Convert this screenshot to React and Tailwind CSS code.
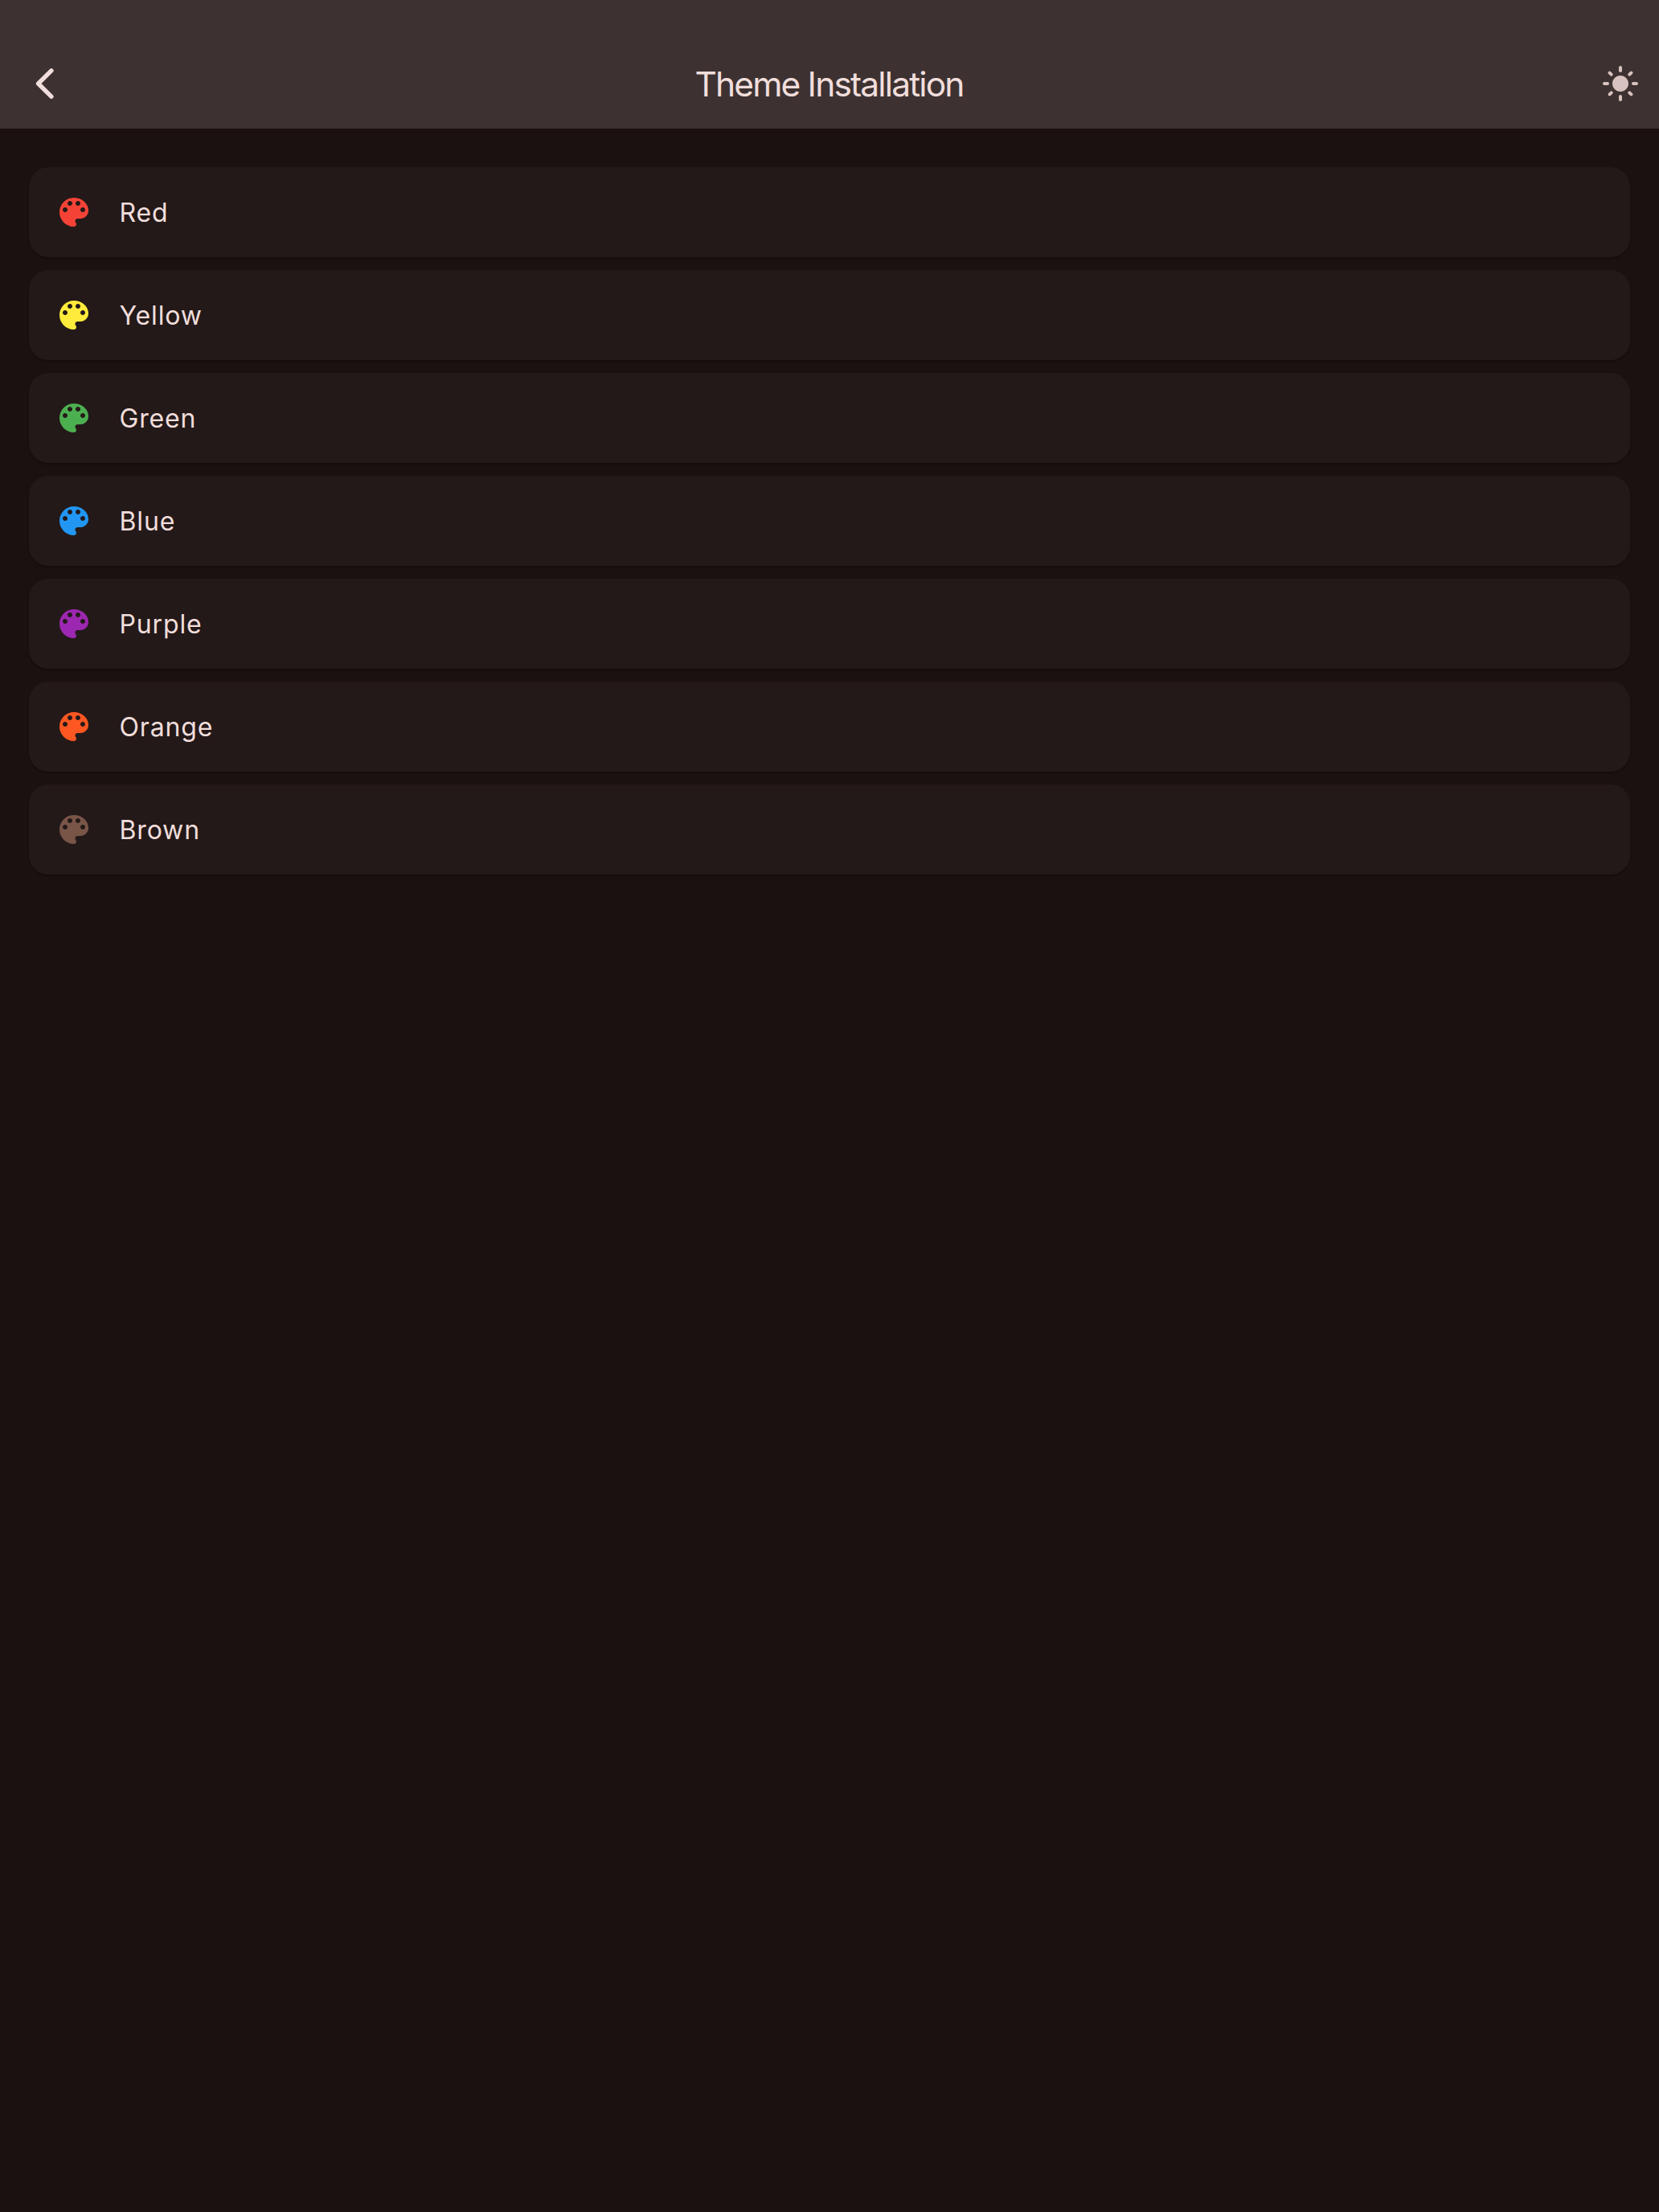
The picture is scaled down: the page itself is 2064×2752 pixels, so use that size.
import React from "react";
import { MdLightMode } from "react-icons/md";

const themes = [
  { name: "Red", color: "text-[#f44336]" },
  { name: "Yellow", color: "text-[#ffeb3b]" },
  { name: "Green", color: "text-[#4caf50]" },
  { name: "Blue", color: "text-[#2196f3]" },
  { name: "Purple", color: "text-[#9c27b0]" },
  { name: "Orange", color: "text-[#ff5722]" },
  { name: "Brown", color: "text-[#795548]" },
];

function BackIcon() {
  return (
    <svg viewBox="0 0 48 48" className="size-12" fill="none" stroke="currentColor">
      <path d="M31.9 7.8 15.6 24 31.9 40.2" strokeWidth="5.4" strokeLinecap="round" strokeLinejoin="round" />
    </svg>
  );
}

function PaletteIcon({ className }) {
  return (
    <svg viewBox="0 0 24 24" className={className} fill="currentColor">
      <path d="M12 3c-4.97 0-9 4.03-9 9s4.03 9 9 9c.83 0 1.5-.67 1.5-1.5 0-.39-.15-.74-.39-1.01-.23-.26-.38-.61-.38-.99 0-.83.67-1.5 1.5-1.5H16c2.76 0 5-2.24 5-5 0-4.42-4.03-8-9-8zm-5.5 9c-.83 0-1.5-.67-1.5-1.5S5.67 9 6.5 9 8 9.67 8 10.5 7.33 12 6.5 12zm3-4C8.67 8 8 7.33 8 6.5S8.67 5 9.5 5s1.5.67 1.5 1.5S10.33 8 9.5 8zm5 0c-.83 0-1.5-.67-1.5-1.5S13.67 5 14.5 5s1.5.67 1.5 1.5S15.33 8 14.5 8zm3 4c-.83 0-1.5-.67-1.5-1.5S16.67 9 17.5 9s1.5.67 1.5 1.5-.67 1.5-1.5 1.5z" />
    </svg>
  );
}

function Header() {
  return (
    <header className="flex h-40 items-end bg-[#3d3231] pt-12">
      <div className="grid h-28 w-full grid-cols-[1fr_auto_1fr] items-center pr-6 pl-6">
        <button aria-label="Back" className="ml-2 justify-self-start">
          <BackIcon />
        </button>
        <h1 className="pt-0.5 pr-px text-[42.5px] leading-[56px] tracking-[-1.85px]">
          Theme Installation
        </h1>
        <button aria-label="Light mode" className="justify-self-end text-[#d8c2bf]">
          <MdLightMode className="size-12" />
        </button>
      </div>
    </header>
  );
}

function ThemeCard({ name, color }) {
  return (
    <li className="flex h-28 items-center gap-8 rounded-3xl bg-[#231918] px-8 shadow-[0_2px_2px_rgba(0,0,0,0.2)]">
      <PaletteIcon className={`size-12 ${color}`} />
      <span className="pt-0.5 pl-[0.5px] text-[32px] leading-[48px] tracking-[0.85px]">{name}</span>
    </li>
  );
}

export default function App() {
  return (
    <div className="min-h-screen bg-[#1a1110] font-['Inter',sans-serif] text-[#f1dedc]">
      <Header />
      <main className="px-9 pt-12">
        <ul className="flex flex-col gap-4">
          {themes.map((theme) => (
            <ThemeCard key={theme.name} {...theme} />
          ))}
        </ul>
      </main>
    </div>
  );
}
